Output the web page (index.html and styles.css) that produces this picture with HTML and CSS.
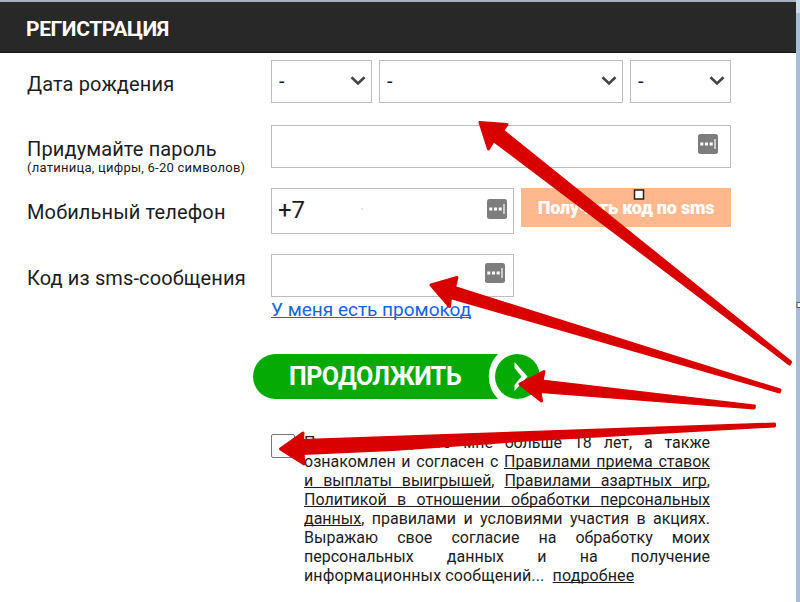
FILE: index.html
```html
<!DOCTYPE html>
<html lang="ru">
<head>
    <meta charset="UTF-8">
    <meta name="viewport" content="width=device-width, initial-scale=1.0">
    <title>Регистрация</title>
    <link rel="stylesheet" href="styles.css">
</head>
<body>

    <div class="page">
        <div class="header">РЕГИСТРАЦИЯ</div>

        <div class="form">
            <!-- Date of birth -->
            <div class="row row-date">
                <div class="label">Дата рождения</div>
                <div class="fields">
                    <div class="field select small">-<svg class="chevron" width="16" height="10" viewBox="0 0 16 10"><path d="M1.5 1.2 8 7.4 14.5 1.2"/></svg></div>
                    <div class="field select">-<svg class="chevron" width="16" height="10" viewBox="0 0 16 10"><path d="M1.5 1.2 8 7.4 14.5 1.2"/></svg></div>
                    <div class="field select small">-<svg class="chevron" width="16" height="10" viewBox="0 0 16 10"><path d="M1.5 1.2 8 7.4 14.5 1.2"/></svg></div>
                </div>
            </div>

            <!-- Password -->
            <div class="row row-password">
                <div class="label">Придумайте пароль<small>(латиница, цифры, 6-20 символов)</small></div>
                <div class="fields">
                    <div class="field input"><svg class="key" width="20" height="20" viewBox="0 0 20 20"><rect width="20" height="20" rx="2.5" fill="#7d7d7d"/><path d="M2.3 8.5h3v3h-3zM7 8.5h3v3H7zM11.7 8.5h3v3h-3z" fill="#fff"/><path d="M16 5h2v10h-2z" fill="#ccc"/></svg></div>
                </div>
            </div>

            <!-- Phone -->
            <div class="row row-phone">
                <div class="label">Мобильный телефон</div>
                <div class="fields">
                    <div class="field input half"><span class="prefix">+7</span><svg class="key" width="20" height="20" viewBox="0 0 20 20"><rect width="20" height="20" rx="2.5" fill="#7d7d7d"/><path d="M2.3 8.5h3v3h-3zM7 8.5h3v3H7zM11.7 8.5h3v3h-3z" fill="#fff"/><path d="M16 5h2v10h-2z" fill="#ccc"/></svg></div>
                    <div class="sms-button">Получить код по sms</div>
                </div>
            </div>

            <!-- Sms code -->
            <div class="row row-code">
                <div class="label">Код из sms-сообщения</div>
                <div class="fields">
                    <div class="field input half"><svg class="key" width="20" height="20" viewBox="0 0 20 20"><rect width="20" height="20" rx="2.5" fill="#7d7d7d"/><path d="M2.3 8.5h3v3h-3zM7 8.5h3v3H7zM11.7 8.5h3v3h-3z" fill="#fff"/><path d="M16 5h2v10h-2z" fill="#ccc"/></svg></div>
                </div>
            </div>
            <div class="promo"><a>У меня есть промокод</a></div>

            <div class="submit">
                <div class="submit-text">ПРОДОЛЖИТЬ</div>
                <svg width="52" height="45" viewBox="0 0 52 45"><path d="M10 0A32 32 0 0 0 10 45H52V0z" fill="#fff"/><circle cx="29.5" cy="22.5" r="22.5" fill="#05aa05"/><path d="M26.500 8V14L33.500 22.500 26.500 31V37L39.500 22.500z" fill="#fff"/></svg>
            </div>

            <!-- Terms -->
            <div class="terms">
                <div class="checkbox"></div>
                <div class="terms-text">
                    <p>Подтверждаю, что мне больше 18 лет, а также<br>
                    ознакомлен и согласен с <a>Правилами приема ставок</a><br>
                    <a>и выплаты выигрышей</a>, <a>Правилами азартных игр</a>,<br>
                    <a>Политикой в отношении обработки персональных</a><br>
                    <a>данных</a>, правилами и условиями участия в акциях.<br>
                    Выражаю свое согласие на обработку моих<br>
                    персональных данных и на получение</p>
                    <p class="last">информационных сообщений...&nbsp; <a>подробнее</a></p>
                </div>
            </div>
        </div>
    </div>
    <div class="window-edge"></div>

    <!-- Arrows drawn over the form -->
    <svg class="arrows" width="800" height="602" viewBox="0 0 800 602">
        <g fill="#d90000" stroke="#d90000" stroke-width="3" stroke-linejoin="round">
            <path d="M480 122.500 507 124.500 502.500 130.500 790.500 362 789.500 364 493.500 140.500 488.500 149z"/>
            <path d="M431 285 457 277.500 454.500 287.500 780 390 779.500 392 450.500 297.500 449.500 306.500z"/>
            <path d="M520 384 544 371.500 542 381 754.500 406 754 408 540 391.500 541.500 401z"/>
            <path d="M280.500 449 303 433 302.500 440.500 774.500 424 774.500 426 527 440 393 449.500 303 453.500 304 464z"/>
        </g>
        <rect x="634.500" y="190" width="9" height="9" fill="#fff" stroke="#222" stroke-width="1.500"/>
        <rect x="797" y="302.500" width="6" height="5" fill="#fff" stroke="#555"/>
        <circle cx="362" cy="209" r="0.8" fill="#b5c9c9"/>
    </svg>

</body>
</html>
```
FILE: styles.css
```css
body {
    font-family: Roboto, "Liberation Sans", sans-serif;
    margin: 0;
    display: flex;
    width: 800px;
    height: 602px;
    overflow: hidden;
    background-color: #fff;
    color: #1c1c22;
}
.page {
    width: 796px;
    border-top: 2px solid #a5b1bf;
    box-sizing: border-box;
}
.window-edge {
    width: 4px;
    background: linear-gradient(#c9daed 13px, #a9bdd6 13px);
}
.header {
    height: 51px;
    line-height: 55px;
    padding-left: 26px;
    background-color: #282828;
    color: #fff;
    font-size: 21px;
    font-weight: bold;
    letter-spacing: -0.4px;
    box-sizing: border-box;
    border-bottom: 1px solid #151515;
}
.form {
    padding: 7px 65px 0 27px;
}
.row {
    display: flex;
}
.label {
    width: 244px;
    flex-shrink: 0;
    font-size: 20px;
    line-height: 24px;
    letter-spacing: 0.13px;
    padding-top: 12px;
    box-sizing: border-box;
    white-space: nowrap;
}
.label small {
    display: block;
    font-size: 13px;
    line-height: 14px;
    letter-spacing: 0.25px;
}
.fields {
    display: flex;
    flex-grow: 1;
    gap: 7px;
    align-items: flex-start;
}
.field {
    display: flex;
    flex-grow: 1;
    justify-content: space-between;
    box-sizing: border-box;
    height: 43px;
    border: 1px solid #bdbdbd;
    padding: 0 5px 0 7px;
    font-size: 20px;
    line-height: 41px;
}
.field.small {
    flex: 0 0 101px;
}
.field.half {
    flex: 0 0 243px;
}
.chevron {
    margin-top: 15px;
    fill: none;
    stroke: #444;
    stroke-width: 2.6;
}
.input {
    justify-content: flex-end;
    padding-right: 12px;
}
.key {
    margin-top: 8px;
}
.row-date {
    height: 65px;
}
.row-password {
    height: 63px;
}
.row-phone {
    height: 66px;
}
.row-phone .field {
    height: 46px;
    padding-left: 6px;
    padding-right: 6px;
    justify-content: space-between;
}
.row-phone .key {
    margin-top: 10px;
}
.row-code .field {
    padding-right: 8px;
}
.prefix {
    font-size: 24px;
    line-height: 43px;
}
.sms-button {
    flex-grow: 1;
    height: 39px;
    line-height: 40px;
    background-color: #ffb78d;
    color: #fff;
    font-size: 18px;
    font-weight: 900;
    letter-spacing: -0.2px;
    text-align: center;
}
.promo {
    margin: 0 0 0 244px;
    height: 57px;
    line-height: 25px;
    font-size: 19px;
    color: #1565e0;
}
a {
    text-decoration: underline;
    text-decoration-skip-ink: none;
}
.submit {
    display: flex;
    width: 287px;
    height: 45px;
    margin-left: 226px;
    background-color: #05aa05;
    border-radius: 23px;
    overflow: hidden;
}
.submit-text {
    width: 235px;
    padding-left: 36px;
    box-sizing: border-box;
    color: #fff;
    font-size: 25px;
    font-weight: bold;
    letter-spacing: -0.5px;
    line-height: 45px;
}
.terms {
    display: flex;
    gap: 9px;
    margin: 35px 0 0 244px;
}
.checkbox {
    width: 22px;
    height: 22px;
    border: 1px solid #777;
    border-radius: 2px;
}
.terms-text {
    width: 406px;
    margin-top: -1px;
    font-size: 16px;
    line-height: 19px;
}
.terms-text p {
    margin: 0;
    text-align: justify;
    text-align-last: justify;
}
.terms-text .last {
    text-align-last: left;
    letter-spacing: 0.13px;
}
.arrows {
    position: absolute;
    left: 0;
    top: 0;
}
```
